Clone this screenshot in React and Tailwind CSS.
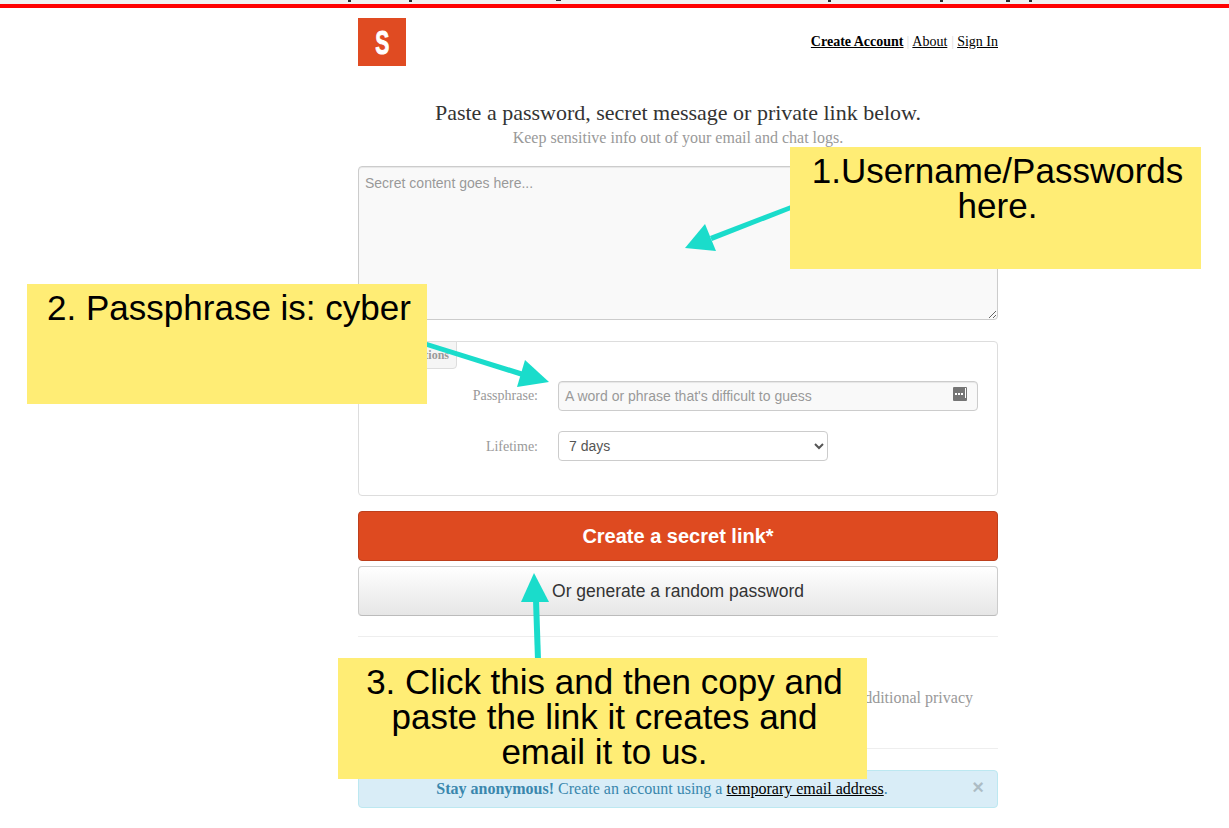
const Note = ({ className, children }) => (
  <div className={`absolute bg-[#ffed75] pt-[6px] text-center text-black text-[35px] leading-[35px] font-['Liberation_Sans',sans-serif] ${className}`}>
    {children}
  </div>
);

export default function App() {
  return (
    <div className="relative h-[828px] w-[1229px] overflow-hidden bg-white font-['Liberation_Serif',serif]">
      <div className="h-2 border-b-4 border-[#ff0000] bg-[#f0f0f0] overflow-hidden"></div>
      <div className="ml-[358px] w-[640px]">
        <header className="flex items-center justify-between pt-2.5">
          <div className="flex h-12 w-12 items-center justify-center bg-[#e04b22]">
            <span className="font-['Liberation_Sans',sans-serif] text-[34px] font-bold text-white leading-none scale-x-[0.62] [-webkit-text-stroke:1px_white]">S</span>
          </div>
          <nav className="text-sm text-black">
            <a className="font-bold underline">Create Account</a>
            <span className="mx-[3px] text-[#ddd]">|</span>
            <a className="underline">About</a>
            <span className="ml-[4px] mr-[3px] text-[#ddd]">|</span>
            <a className="underline">Sign In</a>
          </nav>
        </header>
        <div className="mt-[33px] text-center">
          <h1 className="text-[22px] leading-[28px] text-[#333]">Paste a password, secret message or private link below.</h1>
          <p className="mt-[2px] text-base leading-[18px] text-[#999]">Keep sensitive info out of your email and chat logs.</p>
        </div>
        <textarea
          readOnly
          placeholder="Secret content goes here..."
          className="mt-[19px] block h-[154px] w-full rounded-[4px] border border-[#ccc] bg-[#f9f9f9] px-1.5 py-1.5 font-['Liberation_Sans',sans-serif] text-sm leading-5 shadow-[inset_0_1px_1px_rgba(0,0,0,0.075)] placeholder:text-[#999]"
        />
        <section className="relative mt-[21px] h-[155px] rounded-[4px] border border-[#ddd] pr-[19px] pt-[39px]">
          <div className="absolute left-[-1px] top-[-1px] flex h-[28px] w-[99px] items-center justify-end rounded-br-[4px] rounded-tl-[4px] border border-[#ddd] bg-[#f5f5f5] pr-[7px] text-xs font-bold text-[#999]">
            Privacy Options
          </div>
          <div className="flex items-center">
            <label className="w-[179px] text-right text-sm text-[#999]">Passphrase:</label>
            <div className="relative ml-5 flex h-[30px] flex-1 items-center rounded-[4px] border border-[#ccc] bg-[#f9f9f9] px-1.5 font-['Liberation_Sans',sans-serif] text-sm text-[#999] shadow-[inset_0_1px_1px_rgba(0,0,0,0.075)]">
              A word or phrase that's difficult to guess
              <svg className="absolute right-[10px] top-[5px]" width="14" height="14" viewBox="0 0 14 14">
                <rect x="0" y="0" width="14" height="14" rx="1" fill="#757575" />
                <rect x="2" y="6" width="2" height="2" fill="#fff" />
                <rect x="5" y="6" width="2" height="2" fill="#fff" />
                <rect x="8" y="6" width="2" height="2" fill="#fff" />
                <rect x="12" y="1" width="1" height="10" fill="#fff" />
              </svg>
            </div>
          </div>
          <div className="mt-5 flex items-center">
            <label className="w-[179px] pt-px text-right text-sm text-[#999]">Lifetime:</label>
            <select className="ml-5 h-[30px] w-[270px] rounded-[4px] border border-[#ccc] bg-white pl-[6px] font-['Liberation_Sans',sans-serif] text-sm text-[#555]" defaultValue="7 days">
              <option>7 days</option>
            </select>
          </div>
        </section>
        <button className="mt-[15px] block h-[50px] w-full rounded-[4px] border border-[#bd3f1c] bg-[#de4a20] font-['Liberation_Sans',sans-serif] text-xl font-bold text-white">
          Create a secret link*
        </button>
        <button className="mt-[5px] block h-[50px] w-full rounded-[4px] border border-[#ccc] border-b-[#bbb] bg-gradient-to-b from-white to-[#e6e6e6] font-['Liberation_Sans',sans-serif] text-[17.5px] text-[#333]">
          Or generate a random password
        </button>
        <div className="mt-5 h-[113px] border-y border-[#eee] pr-[25px] pt-[21px] text-right text-base leading-5 text-[#999]">
          <div className="mr-[105px] h-[30px] text-lg font-bold leading-5 text-[#777]">:</div>
          additional privacy
        </div>
        <div className="relative mt-[21px] flex h-[38px] items-center justify-center rounded-[4px] border border-[#bce8f1] bg-[#d9edf7] pr-[32px] text-base text-[#3a87ad]">
          <span><b>Stay anonymous!</b> Create an account using a <a className="text-black underline">temporary email address</a>.</span>
          <span className="absolute right-[13px] top-[4px] font-['Liberation_Sans',sans-serif] text-xl font-bold leading-6 text-black opacity-20">×</span>
        </div>
      </div>

      <svg className="pointer-events-none absolute inset-0" width="1229" height="828">
        <g fill="#2a2a2a">
          <rect x="348" y="0" width="3" height="2" />
          <rect x="409" y="0" width="3" height="2" />
          <rect x="556" y="0" width="5" height="1" />
          <rect x="828" y="0" width="3" height="2" />
          <rect x="940" y="0" width="3" height="2" />
          <rect x="1006" y="0" width="4" height="2" />
          <rect x="1029" y="0" width="3" height="2" />
        </g>
        <g fill="#1adccb" stroke="none">
          <polygon points="791,205 791,210 712,241 710,236" />
          <polygon points="685,248 705,224 716,251" />
          <polygon points="427,342 524,372 522,377 427,347" />
          <polygon points="549,382 517,387 525,360" />
          <polygon points="533,600 539,600 541,660 535,660" />
          <polygon points="534,573 521,602 549,602" />
        </g>
      </svg>

      <Note className="left-[790px] top-[147px] h-[122px] w-[411px] pl-1">1.Username/Passwords here.</Note>
      <Note className="left-[27px] top-[284px] h-[120px] w-[400px] pl-1">2. Passphrase is: cyber</Note>
      <Note className="left-[338px] top-[658px] h-[121px] w-[529px] pl-4 pr-3">3. Click this and then copy and paste the link it creates and email it to us.</Note>
    </div>
  );
}
